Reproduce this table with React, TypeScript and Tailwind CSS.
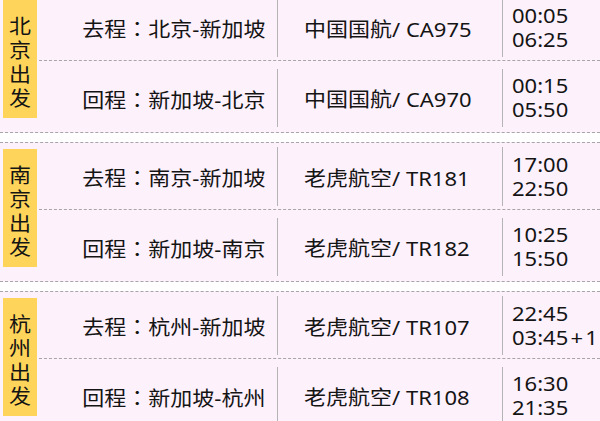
import React from "react";

type Row = { dir: string; route: string; flight: string; dep: string; arr: string };
type Block = { label: string; rows: [Row, Row] };

const blocks: Block[] = [
  {
    label: "北\n京\n出\n发",
    rows: [
      { dir: "去程", route: "北京-新加坡", flight: "中国国航/ CA975", dep: "00:05", arr: "06:25" },
      { dir: "回程", route: "新加坡-北京", flight: "中国国航/ CA970", dep: "00:15", arr: "05:50" },
    ],
  },
  {
    label: "南\n京\n出\n发",
    rows: [
      { dir: "去程", route: "南京-新加坡", flight: "老虎航空/ TR181", dep: "17:00", arr: "22:50" },
      { dir: "回程", route: "新加坡-南京", flight: "老虎航空/ TR182", dep: "10:25", arr: "15:50" },
    ],
  },
  {
    label: "杭\n州\n出\n发",
    rows: [
      { dir: "去程", route: "杭州-新加坡", flight: "老虎航空/ TR107", dep: "22:45", arr: "03:45\u200A+\u200A1" },
      { dir: "回程", route: "新加坡-杭州", flight: "老虎航空/ TR108", dep: "16:30", arr: "21:35" },
    ],
  },
];

function Cells({ row }: { row: Row }) {
  return (
    <>
      <div className="w-[238px] flex items-center justify-end pr-[12px] pt-[4px] leading-[24px]">
        <span className="inline-block origin-right scale-x-110 whitespace-nowrap">
          {row.dir}
          <span style={{ fontFamily: '"Noto Sans CJK TC", "Noto Sans CJK SC", sans-serif' }}>：</span>
          {row.route}
        </span>
      </div>
      <div className="w-[225px] border-l border-[#b4b4b4] flex items-center pl-[26px] pt-[4px] leading-[24px]">
        <span className="inline-block origin-left scale-x-110 whitespace-nowrap">{row.flight}</span>
      </div>
      <div className="flex-1 border-l border-[#b4b4b4] flex items-center pl-[9px] leading-[24px]">
        <span className="inline-block origin-left scale-x-110 whitespace-pre">{`${row.dep}\n${row.arr}`}</span>
      </div>
    </>
  );
}

function BlockView({ block }: { block: Block }) {
  return (
    <div className="flex border-y border-dashed border-[#a6a6a6] bg-[#fdf1fc] pt-[4px] pb-[5px] mb-[9px]">
      <div className="w-[39px] shrink-0 pl-[3px]">
        <div className="mt-[2px] w-[34px] h-[118px] bg-[#fed55a] flex flex-col items-center justify-center pt-[7px] leading-[24px]">
          <span className="inline-block scale-x-110 whitespace-pre text-center">{block.label}</span>
        </div>
      </div>
      <div className="flex-1 flex flex-col">
        <div className="h-[63px] flex border-b border-dashed border-[#a6a6a6]">
          <div className="flex w-full pb-[3px]">
            <Cells row={block.rows[0]} />
          </div>
        </div>
        <div className="h-[66px] flex pt-[8px]">
          <Cells row={block.rows[1]} />
        </div>
      </div>
    </div>
  );
}

export default function App() {
  return (
    <div
      className="w-[600px] h-[421px] overflow-hidden bg-white text-[20px] text-[#141414]"
      style={{ fontFamily: '"Noto Sans", "Noto Sans CJK SC", sans-serif' }}
    >
      <div className="-mt-[7px]">
        {blocks.map((b, i) => (
          <BlockView key={i} block={b} />
        ))}
      </div>
    </div>
  );
}
